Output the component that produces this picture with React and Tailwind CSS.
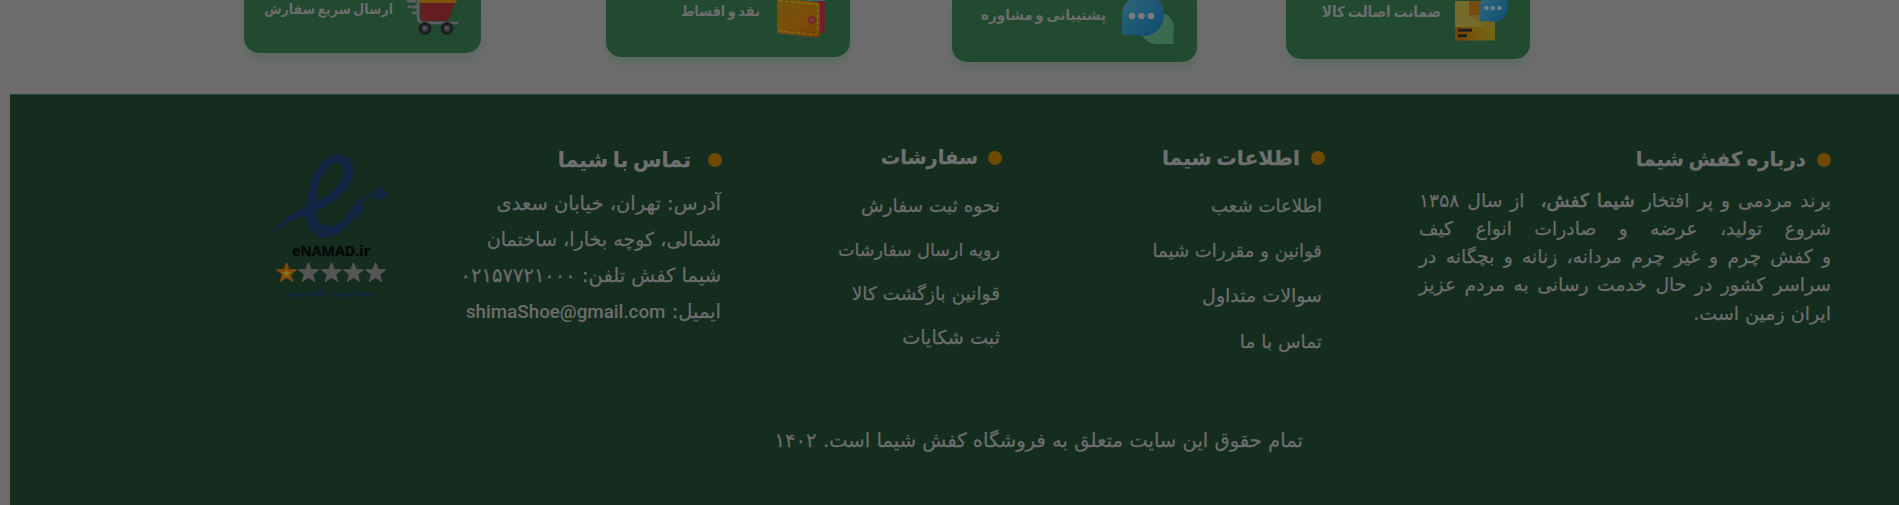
function CartIcon() {
  return (
    <svg className="h-[36px] w-[52px] shrink-0" viewBox="0 0 52 36">
      <g stroke="#5c5e60" strokeWidth="2.600" fill="none" strokeLinecap="round">
        <path d="M1 1h7M2 7h1M6 7h3M6 13h3" strokeWidth="2.800" />
        <path d="M11 0v17q0 6 6 6h33" />
      </g>
      <path d="M13 2h35l-7 19H14z" fill="#641e22" />
      <path d="M12 0h38l-1 3H13z" fill="#805408" />
      <circle cx="18" cy="28.500" r="6.500" fill="#1c1f20" />
      <circle cx="40" cy="28.500" r="6.500" fill="#1c1f20" />
      <circle cx="18" cy="28.500" r="3.200" fill="#3c3f40" />
      <circle cx="40" cy="28.500" r="3.200" fill="#3c3f40" />
      <circle cx="17.500" cy="28" r="1.200" fill="#666" />
      <circle cx="39.500" cy="28" r="1.200" fill="#666" />
    </svg>
  );
}

function WalletIcon() {
  return (
    <svg className="h-[38px] w-[49px] shrink-0" viewBox="0 0 49 38">
      <defs>
        <linearGradient id="wallet" x1="0" y1="0" x2="1" y2="1">
          <stop offset="0" stopColor="#73500f" />
          <stop offset="0.500" stopColor="#7a500a" />
          <stop offset="1" stopColor="#783b05" />
        </linearGradient>
      </defs>
      <path d="M30 0h18v30q0 3-3 3H34z" fill="#6c2025" />
      <path d="M25 0h23v1H30z" fill="#2a6d72" />
      <path d="M0 0h22l18 2q3 .5 3 3v29q0 4-4 3.400L3 33.500q-3-.3-3-3z" fill="url(#wallet)" />
      <path d="M2 .8 38 4q2.500.4 2.500 3v24q0 4-3 3.700L2 30.800" fill="none" stroke="#827c12" strokeWidth="1.100" strokeDasharray="4 2" />
      <circle cx="35" cy="20" r="4" fill="#7a2424" />
      <circle cx="35" cy="20" r="2" fill="#6b4242" />
    </svg>
  );
}

function ChatIcon() {
  return (
    <svg className="h-[45px] w-[54px] shrink-0" viewBox="0 0 54 45">
      <defs>
        <linearGradient id="bubbleBlue" x1="0" y1="0" x2="1" y2="1">
          <stop offset="0.200" stopColor="#2b6178" />
          <stop offset="1" stopColor="#0b4a70" />
        </linearGradient>
        <linearGradient id="bubbleGreen" x1="0" y1="0" x2="1" y2="1">
          <stop offset="0" stopColor="#426b55" />
          <stop offset="1" stopColor="#346a4b" />
        </linearGradient>
      </defs>
      <path d="M36 12c10 0 17 7 17 16l-1 16H36c-7 0-13-4-15-9z" fill="url(#bubbleGreen)" />
      <path d="M1 35V15C1 4 10-6 22-6s21 9 21 21-9 21-21 21q-5 0-9-1z" fill="url(#bubbleBlue)" />
      <g fill="#757b7e">
        <circle cx="11" cy="16" r="3.300" />
        <circle cx="20.500" cy="16" r="3.300" />
        <circle cx="30" cy="16" r="3.300" />
      </g>
    </svg>
  );
}

function PackageIcon() {
  return (
    <svg className="h-[41px] w-[53px] shrink-0" viewBox="0 0 53 41">
      <defs>
        <linearGradient id="boxLower" x1="0" y1="0" x2="1" y2="0">
          <stop offset="0" stopColor="#744407" />
          <stop offset="0.700" stopColor="#76600f" />
          <stop offset="1" stopColor="#706711" />
        </linearGradient>
        <linearGradient id="boxBubble" x1="0" y1="0" x2="1" y2="1">
          <stop offset="0.200" stopColor="#2b6480" />
          <stop offset="1" stopColor="#0e4d72" />
        </linearGradient>
      </defs>
      <path d="M0 1h40v38q0 1.500-1.500 1.500h-37Q0 40.500 0 39z" fill="url(#boxLower)" />
      <path d="M0 1h14v14l18 12H0z" fill="#746b2c" />
      <path d="M14 1h12v14H14z" fill="#764b0d" />
      <path d="M15 15h12l13 8v8z" fill="#6e6522" />
      <path d="M3 28.800h14v3H3zM3 34.200h9v3H3z" fill="#20211d" />
      <path d="M25 21V7C25-1 31-7 39-7s14 6 14 14-6 15-14 15q-3 0-5-1z" fill="url(#boxBubble)" />
      <g fill="#71818a">
        <circle cx="31.500" cy="8" r="2.200" />
        <circle cx="38" cy="8" r="2.200" />
        <circle cx="44.500" cy="8" r="2.200" />
      </g>
    </svg>
  );
}

function Card({ className, textClass, icon, children }) {
  return (
    <div className={"flex shrink-0 items-start rounded-b-[15px] bg-[#214a31] shadow-[0_6px_10px_rgba(50,100,70,0.28)] " + className}>
      {icon}
      <span className={"shrink-0 whitespace-nowrap font-['DejaVu_Sans_Condensed','DejaVu_Sans',sans-serif] font-bold leading-[20px] [word-spacing:-2px] " + textClass}>
        {children}
      </span>
    </div>
  );
}

function Heading({ className, children }) {
  return (
    <h3 className={"flex h-[30px] items-center whitespace-nowrap font-bold leading-[30px] text-[#707070] [word-spacing:-2.500px] " + className}>
      <span className="size-[14px] shrink-0 rounded-full bg-[#6f4900]" />
      {children}
    </h3>
  );
}

function Star({ active }) {
  return (
    <svg className="size-[21px]" viewBox="0 0 24 24">
      <path
        d="M12 .8l2.900 7.700 8.300.4-6.500 5.200 2.200 8-6.900-4.600-6.900 4.600 2.200-8L.8 8.900l8.300-.4z"
        fill={active ? "#814907" : "#565656"}
        stroke={active ? "#814907" : "#565656"}
        strokeWidth="1.200"
        strokeLinejoin="round"
      />
      {active && <path d="M12 8l1.300 3.200 3.500.1-2.800 2.200 1 3.400-3-1.900-3 1.900 1-3.400-2.800-2.200 3.500-.1z" fill="#88761b" />}
    </svg>
  );
}

function Enamad() {
  return (
    <div className="mr-[69px] flex w-[120px] shrink-0 flex-col items-center pt-[56px]">
      <svg className="h-[88px] w-[117px]" viewBox="100 60 351 264">
        <path
          fillRule="evenodd"
          fill="#122545"
          stroke="#122545"
          strokeWidth="2"
          d="M100 304C125 268 163 244 202 229C205 150 240 70 298 71C334 73 344 100 339 130C330 180 282 216 228 240C227 270 245 287 272 287C300 285 315 265 325 250C342 222 358 205 395 185C391 199 374 208 356 220L370 222C370 240 360 255 338 262C315 300 285 320 250 318C220 315 203 290 200 252C160 262 130 278 100 304ZM227 214C275 195 305 160 312 125C315 100 300 92 283 97C250 110 228 165 227 214ZM400 189L422 168L444 190L422 213Z"
        />
      </svg>
      <span dir="ltr" className="mt-[3px] font-['Open_Sans',sans-serif] text-[14.200px] font-bold leading-[18px] text-[#040807]">
        eNAMAD.ir
      </span>
      <div dir="ltr" className="mt-[2px] flex gap-[1.300px]">
        <Star active />
        <Star />
        <Star />
        <Star />
        <Star />
      </div>
      <span className="mt-[4px] whitespace-nowrap text-[8px] italic leading-[14px] text-[#13294a]">
        جهت اطمینان کلیک نمایید
      </span>
    </div>
  );
}

export default function App() {
  return (
    <div
      dir="rtl"
      className="flex h-[505px] w-[1899px] flex-col overflow-hidden bg-[#6d6d6d] font-['DejaVu_Sans',sans-serif] text-[#6d6d6d]"
    >
      <section className="flex h-[94px] shrink-0 items-start pr-[369px]">
        <Card className="h-[59px] w-[244px] gap-[14px] pr-[22px]" textClass="pt-[2px] text-[15.300px]" icon={<PackageIcon />}>
          ضمانت اصالت کالا
        </Card>
        <Card className="mr-[89px] h-[62px] w-[245px] gap-[15px] pr-[22px]" textClass="pt-[5px] text-[15.100px]" icon={<ChatIcon />}>
          پشتیبانی و مشاوره
        </Card>
        <Card className="mr-[102px] h-[57px] w-[244px] gap-[17px] pr-[24px]" textClass="pt-px text-[14.400px]" icon={<WalletIcon />}>
          نقد و اقساط
        </Card>
        <Card className="mr-[125px] h-[53px] w-[237px] gap-[14px] pr-[22px]" textClass="-mt-px text-[14px]" icon={<CartIcon />}>
          ارسال سریع سفارش
        </Card>
      </section>

      <footer className="flex h-[411px] w-[1889px] shrink-0 flex-col border-t border-[#24452f] bg-[#142d1f] pr-[68px] [-webkit-text-stroke:0.250px]">
        <div className="flex h-[326px] shrink-0 items-start">
          <div className="w-[412px] shrink-0 pt-[50px]">
            <Heading className="gap-[11px] text-[19.800px]">درباره کفش شیما</Heading>
            <p className="mt-[12px] whitespace-nowrap text-[18.800px] leading-[28px]">
              <span className="block [text-align-last:justify]">
                برند مردمی و پر افتخار{" "}
                <b className="font-normal [-webkit-text-stroke:0.700px]">شیما کفش،</b>&nbsp; از سال ۱۳۵۸
              </span>
              <span className="block [text-align-last:justify]">شروع تولید، عرضه و صادرات انواع کیف</span>
              <span className="block [text-align-last:justify]">و کفش چرم و غیر چرم مردانه، زنانه و بچگانه در</span>
              <span className="block [text-align-last:justify]">سراسر کشور در حال خدمت رسانی به مردم عزیز</span>
              <span className="block text-[19px]">ایران زمین است.</span>
            </p>
          </div>

          <div className="mr-[94px] w-[175px] shrink-0 pt-[48px]">
            <Heading className="gap-[11px] text-[20.400px]">اطلاعات شیما</Heading>
            <ul className="mt-[10px] whitespace-nowrap pr-[3px] text-[18.100px] leading-[45.200px]">
              <li>اطلاعات شعب</li>
              <li>قوانین و مقررات شیما</li>
              <li className="text-[19px]">سوالات متداول</li>
              <li className="text-[18.500px]">تماس با ما</li>
            </ul>
          </div>

          <div className="mr-[148px] w-[166px] shrink-0 pt-[48px]">
            <Heading className="gap-[10px] text-[19.400px]">سفارشات</Heading>
            <ul className="mt-[11px] whitespace-nowrap pr-[2px] text-[18.500px] leading-[44px]">
              <li>نحوه ثبت سفارش</li>
              <li className="text-[17.500px]">رویه ارسال سفارشات</li>
              <li>قوانین بازگشت کالا</li>
              <li className="text-[19.200px]">ثبت شکایات</li>
            </ul>
          </div>

          <div className="mr-[114px] w-[262px] shrink-0 pt-[50px]">
            <Heading className="gap-[17px] text-[20.700px]">تماس با شیما</Heading>
            <div className="mt-[11px] whitespace-nowrap pr-px text-[19.500px] leading-[35.900px]">
              <p>آدرس: تهران، خیابان سعدی</p>
              <p className="text-[19.100px]">شمالی، کوچه بخارا، ساختمان</p>
              <p>شیما کفش تلفن: ۰۲۱۵۷۷۲۱۰۰۰</p>
              <p>
                ایمیل:{" "}
                <span dir="ltr" className="font-[Roboto,sans-serif] text-[18.800px] font-medium [-webkit-text-stroke:0px]">
                  shimaShoe@gmail.com
                </span>
              </p>
            </div>
          </div>

          <Enamad />
        </div>
        <p className="mr-[528px] whitespace-nowrap text-[19.600px] leading-[40px]">
          تمام حقوق این سایت متعلق به فروشگاه کفش شیما است. ۱۴۰۲
        </p>
      </footer>
    </div>
  );
}
